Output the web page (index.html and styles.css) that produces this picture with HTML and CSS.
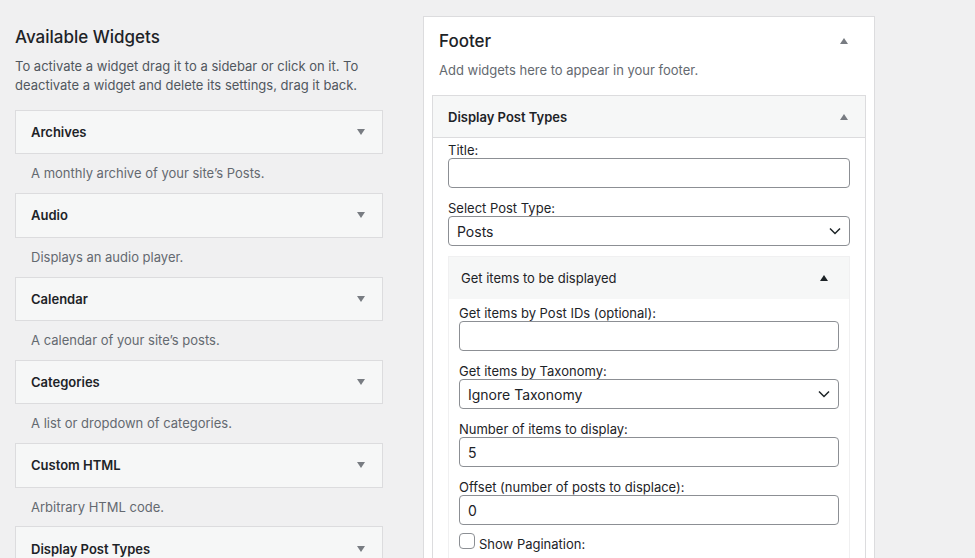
FILE: index.html
```html
<!DOCTYPE html>
<html lang="en">
<head>
<meta charset="utf-8">
<title>Widgets</title>
<link rel="stylesheet" href="styles.css">
</head>
<body>
<div class="page">
  <div class="available">
    <h2 class="heading">Available Widgets</h2>
    <p class="intro">To activate a widget drag it to a sidebar or click on it. To deactivate a widget and delete its settings, drag it back.</p>
    <div class="widget"><span class="wtitle">Archives</span><span class="tri-down"></span></div>
    <div class="wdesc">A monthly archive of your site’s Posts.</div>
    <div class="widget"><span class="wtitle">Audio</span><span class="tri-down"></span></div>
    <div class="wdesc">Displays an audio player.</div>
    <div class="widget"><span class="wtitle">Calendar</span><span class="tri-down"></span></div>
    <div class="wdesc">A calendar of your site’s posts.</div>
    <div class="widget"><span class="wtitle">Categories</span><span class="tri-down"></span></div>
    <div class="wdesc">A list or dropdown of categories.</div>
    <div class="widget"><span class="wtitle">Custom HTML</span><span class="tri-down"></span></div>
    <div class="wdesc">Arbitrary HTML code.</div>
    <div class="widget"><span class="wtitle">Display Post Types</span><span class="tri-down"></span></div>
    <div class="wdesc">&nbsp;</div>
  </div>

  <div class="sidebar">
    <div class="sidebar-head">
      <h2 class="heading">Footer</h2>
      <span class="tri-up"></span>
    </div>
    <p class="sidebar-desc">Add widgets here to appear in your footer.</p>

    <div class="inwidget">
      <div class="inwidget-head">
        <span class="wtitle">Display Post Types</span>
        <span class="tri-up"></span>
      </div>
      <div class="inwidget-body">
        <label class="flabel">Title:</label>
        <div class="field"></div>
        <label class="flabel gap">Select Post Type:</label>
        <div class="field select"><span>Posts</span>
          <svg class="chev" width="12" height="8" viewBox="0 0 12 8"><path d="M1 1.5 L6 6.5 L11 1.5" fill="none" stroke="#1d2327" stroke-width="1.5"/></svg>
        </div>

        <div class="section">
          <div class="section-head">
            <span>Get items to be displayed</span>
            <span class="tri-up dark"></span>
          </div>
          <div class="section-body">
            <label class="flabel">Get items by Post IDs (optional):</label>
            <div class="field"></div>
            <label class="flabel gap">Get items by Taxonomy:</label>
            <div class="field select"><span>Ignore Taxonomy</span>
              <svg class="chev" width="12" height="8" viewBox="0 0 12 8"><path d="M1 1.5 L6 6.5 L11 1.5" fill="none" stroke="#1d2327" stroke-width="1.5"/></svg>
            </div>
            <label class="flabel gap">Number of items to display:</label>
            <div class="field"><span>5</span></div>
            <label class="flabel gap">Offset (number of posts to displace):</label>
            <div class="field"><span>0</span></div>
            <div class="check-row">
              <span class="checkbox"></span>
              <span class="flabel">Show Pagination:</span>
            </div>
          </div>
        </div>
      </div>
    </div>
  </div>
</div>
</body>
</html>
```

FILE: styles.css
```css
html, body {
  margin: 0;
  padding: 0;
  background: #f0f0f1;
  height: 558px;
  overflow: hidden;
}
body {
  font-family: Inter, "Liberation Sans", sans-serif;
  color: #1d2327;
}
.page {
  display: flex;
  align-items: flex-start;
  gap: 40px;
  padding-left: 15px;
}
.available {
  width: 368px;
  padding-top: 26px;
  flex: none;
}
.heading {
  margin: 0;
  font-size: 17px;
  line-height: 22px;
  font-weight: 500;
  color: #1d2327;
}
.intro {
  margin: 9px 0 15px;
  font-size: 13px;
  line-height: 19px;
  color: #50575e;
}
.widget {
  box-sizing: border-box;
  height: 44.4px;
  border: 1px solid #dcdcde;
  background: #f6f7f7;
  display: flex;
  align-items: center;
  justify-content: space-between;
  padding: 0 17px 0 15px;
}
.wtitle {
  font-size: 13px;
  font-weight: 600;
  line-height: 18px;
  color: #1d2327;
}
.tri-down {
  width: 0;
  height: 0;
  border-left: 4.5px solid transparent;
  border-right: 4.5px solid transparent;
  border-top: 6px solid #787c82;
}
.tri-up {
  width: 0;
  height: 0;
  border-left: 4.5px solid transparent;
  border-right: 4.5px solid transparent;
  border-bottom: 6px solid #787c82;
}
.tri-up.dark {
  border-bottom-color: #1d2327;
}
.wdesc {
  box-sizing: border-box;
  height: 38.9px;
  padding: 10px 0 0 16px;
  font-size: 13px;
  line-height: 18px;
  color: #646970;
}
.sidebar {
  width: 452px;
  box-sizing: border-box;
  margin-top: 16px;
  border: 1px solid #dcdcde;
  background: #fff;
  flex: none;
  height: 560px;
}
.sidebar-head {
  display: flex;
  align-items: center;
  justify-content: space-between;
  padding: 13px 26px 0 15px;
}
.sidebar-desc {
  margin: 9px 0 15px 15px;
  font-size: 13px;
  line-height: 19px;
  color: #646970;
}
.inwidget {
  margin: 0 8px;
  border: 1px solid #dcdcde;
  background: #fff;
}
.inwidget-head {
  box-sizing: border-box;
  height: 42px;
  background: #f6f7f7;
  border-bottom: 1px solid #dcdcde;
  display: flex;
  align-items: center;
  justify-content: space-between;
  padding: 0 17px 0 15px;
}
.inwidget-body {
  padding: 4px 15px 20px;
}
.flabel {
  display: block;
  font-size: 13px;
  line-height: 16px;
  color: #1d2327;
}
.flabel.gap {
  margin-top: 12px;
}
.field {
  box-sizing: border-box;
  height: 30px;
  border: 1px solid #8c8f94;
  border-radius: 4px;
  background: #fff;
  display: flex;
  align-items: center;
  padding: 0 8px;
  font-size: 14px;
  color: #1d2327;
}
.field.select {
  justify-content: space-between;
}
.chev {
  display: block;
}
.section {
  margin-top: 10px;
  border: 1px solid #f0f0f1;
}
.section-head {
  box-sizing: border-box;
  height: 42px;
  background: #f6f7f7;
  display: flex;
  align-items: center;
  justify-content: space-between;
  padding: 0 21px 0 12px;
  font-size: 13px;
  color: #1d2327;
}
.section-body {
  padding: 6px 10px 20px;
}
.check-row {
  display: flex;
  align-items: flex-start;
  gap: 4px;
  margin-top: 8px;
}
.checkbox {
  box-sizing: border-box;
  width: 16px;
  height: 16px;
  border: 1px solid #8c8f94;
  border-radius: 4px;
  background: #fff;
  flex: none;
}
.check-row .flabel {
  line-height: 18px;
  padding-top: 2px;
}
```
